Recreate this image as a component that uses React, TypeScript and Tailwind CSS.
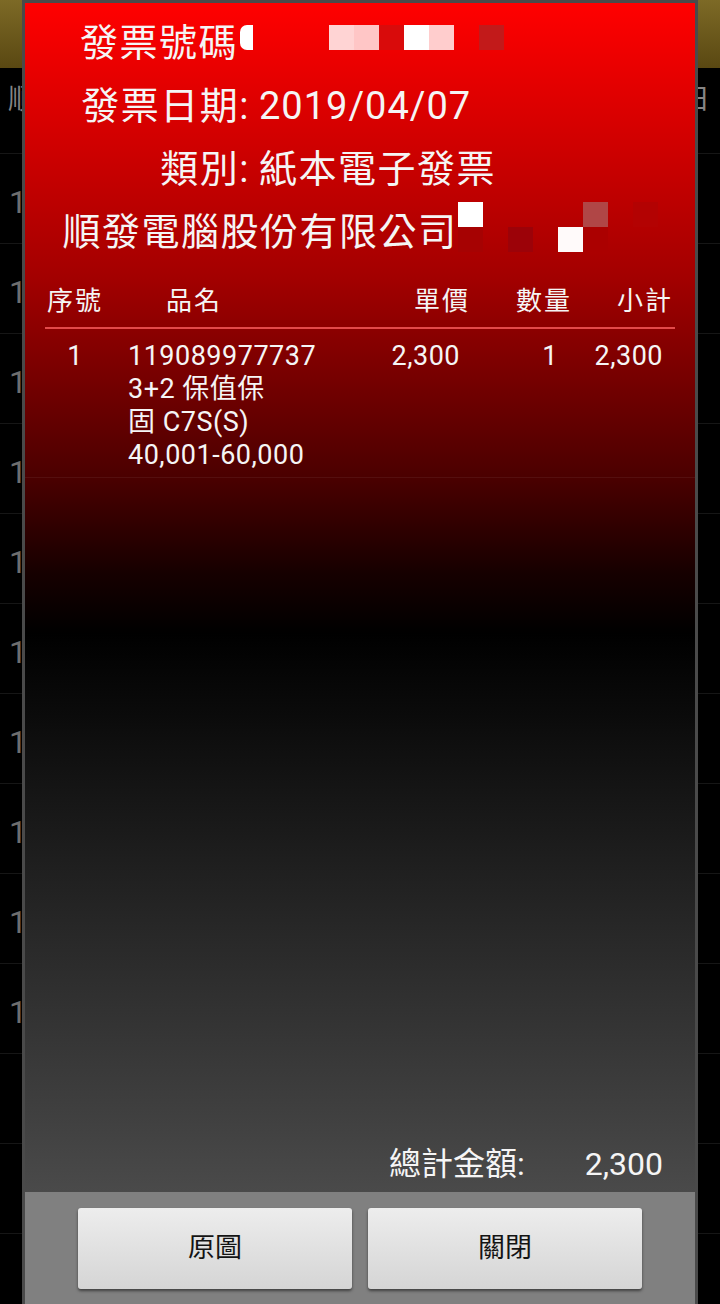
import React from 'react';

const cols = 'grid-cols-[60px_178px_189px_102px_101px]';

const topBlocks = ['#ffd4d4', '#ffc6c6', '#d90b0b', '#ffffff', '#ffcdcd', 'transparent', '#c21a1a'];

// two rows of the pixelated tax id after the company name
const idBlocks = [
  ['#ffffff', '', '', '', '', '#b04646', '', '#b30202'],
  ['#a60202', '', '#9c0208', '', '#fffafa', '#ab0000', '', ''],
];

const BackgroundList: React.FC = () => {
  const rows = Array.from({ length: 12 }, (_, i) => i);
  return (
    <div className="flex flex-col">
      <div className="h-[68px] bg-gradient-to-b from-[#7d6a26] to-[#5a4812]" />
      <div className="flex h-[86px] justify-between border-b border-[#161616] pl-[8px] pr-[10px] pt-[16px] text-[28px] leading-[32px] text-[#858585]">
        <span>順發</span>
        <span>日</span>
      </div>
      {rows.map((i) => (
        <div
          key={i}
          className="flex h-[90px] items-center border-b border-[#161616] pl-[9px] pt-[6px] text-[32px] text-[#6e6e6e]"
        >
          {i < 10 ? '1' : ''}
        </div>
      ))}
    </div>
  );
};

const InvoiceDialog: React.FC = () => {
  return (
    <div className="absolute left-[22px] top-0 flex h-[1304px] w-[676px] flex-col border-x-[3px] border-t-[3px] border-[#4a4a4a] text-[#f5f5f5]">
      <div className="flex flex-1 flex-col bg-[linear-gradient(180deg,#ff0000_0%,#a30000_23%,#4a0000_40%,#160000_48%,#000000_53%,#4a4a4a_100%)]">
        {/* Invoice info */}
        <div className="grid grid-cols-[225px_1fr] pt-[9px] text-[38px] leading-[63px] tracking-[1.5px]">
          <div className="flex items-start justify-end">
            <span>發票號碼</span>
            <span className="-mr-[3px] ml-[2px] mt-[13px] h-[25px] w-[13px] rounded-l-[7px] bg-white" />
          </div>
          <div className="flex items-start pl-[79px] pt-[13px]">
            {topBlocks.map((c, i) => (
              <span key={i} className="h-[25px] w-[25px]" style={{ backgroundColor: c }} />
            ))}
          </div>

          <div className="text-right">發票日期:</div>
          <div className="pl-[9px] tracking-[1px]">2019/04/07</div>

          <div className="text-right">類別:</div>
          <div className="pl-[9px]">紙本電子發票</div>

          <div className="col-span-2 flex h-[63px] justify-center">
            <span>順發電腦股份有限公司</span>
            <div className="mt-[1px] flex flex-col">
              {idBlocks.map((row, r) => (
                <div key={r} className="flex">
                  {row.map((c, i) => (
                    <span key={i} className="h-[25px] w-[25px]" style={{ backgroundColor: c || 'transparent' }} />
                  ))}
                </div>
              ))}
            </div>
          </div>
        </div>

        {/* Item table header */}
        <div className={`mx-[20px] mt-[12px] grid h-[53px] ${cols} items-center border-b-2 border-[#e34a4a] text-[26px] tracking-[2px]`}>
          <div className="text-center">序號</div>
          <div className="text-center">品名</div>
          <div className="pr-[2px] text-right">單價</div>
          <div className="pr-[2px] text-right">數量</div>
          <div className="pr-[2px] text-right">小計</div>
        </div>

        {/* Item row */}
        <div className="border-b border-white/[0.06] pb-[5px] pt-[11px]">
          <div className={`mx-[20px] grid ${cols} text-[27px] leading-[33px] tracking-[0.5px]`}>
            <div className="text-center">1</div>
            <div className="whitespace-nowrap pl-[23px]">
              <div>119089977737</div>
              <div>3+2 保值保</div>
              <div>固 C7S(S)</div>
              <div>40,001-60,000</div>
            </div>
            <div className="pr-[12px] text-right">2,300</div>
            <div className="pr-[16px] text-right">1</div>
            <div className="pr-[12px] text-right">2,300</div>
          </div>
        </div>

        <div className="flex-1" />

        <div className="flex h-[56px] items-center justify-end gap-[60px] pr-[32px] text-[32px]">
          <span>總計金額:</span>
          <span>2,300</span>
        </div>
      </div>

      {/* Buttons */}
      <div className="flex h-[112px] gap-[16px] bg-[#808080] px-[53px] pt-[16px]">
        <button className="flex h-[81px] flex-1 items-center justify-center rounded-[3px] bg-gradient-to-b from-[#ededed] to-[#d5d5d5] text-[27px] text-[#141414] shadow-[0_2px_3px_rgba(0,0,0,0.5)]">
          原圖
        </button>
        <button className="flex h-[81px] flex-1 items-center justify-center rounded-[3px] bg-gradient-to-b from-[#ededed] to-[#d5d5d5] text-[27px] text-[#141414] shadow-[0_2px_3px_rgba(0,0,0,0.5)]">
          關閉
        </button>
      </div>
    </div>
  );
};

export default function App() {
  return (
    <div className="relative h-[1304px] w-[720px] overflow-hidden bg-black font-['Roboto','Noto_Sans_CJK_TC',sans-serif]">
      <BackgroundList />
      <InvoiceDialog />
    </div>
  );
}
